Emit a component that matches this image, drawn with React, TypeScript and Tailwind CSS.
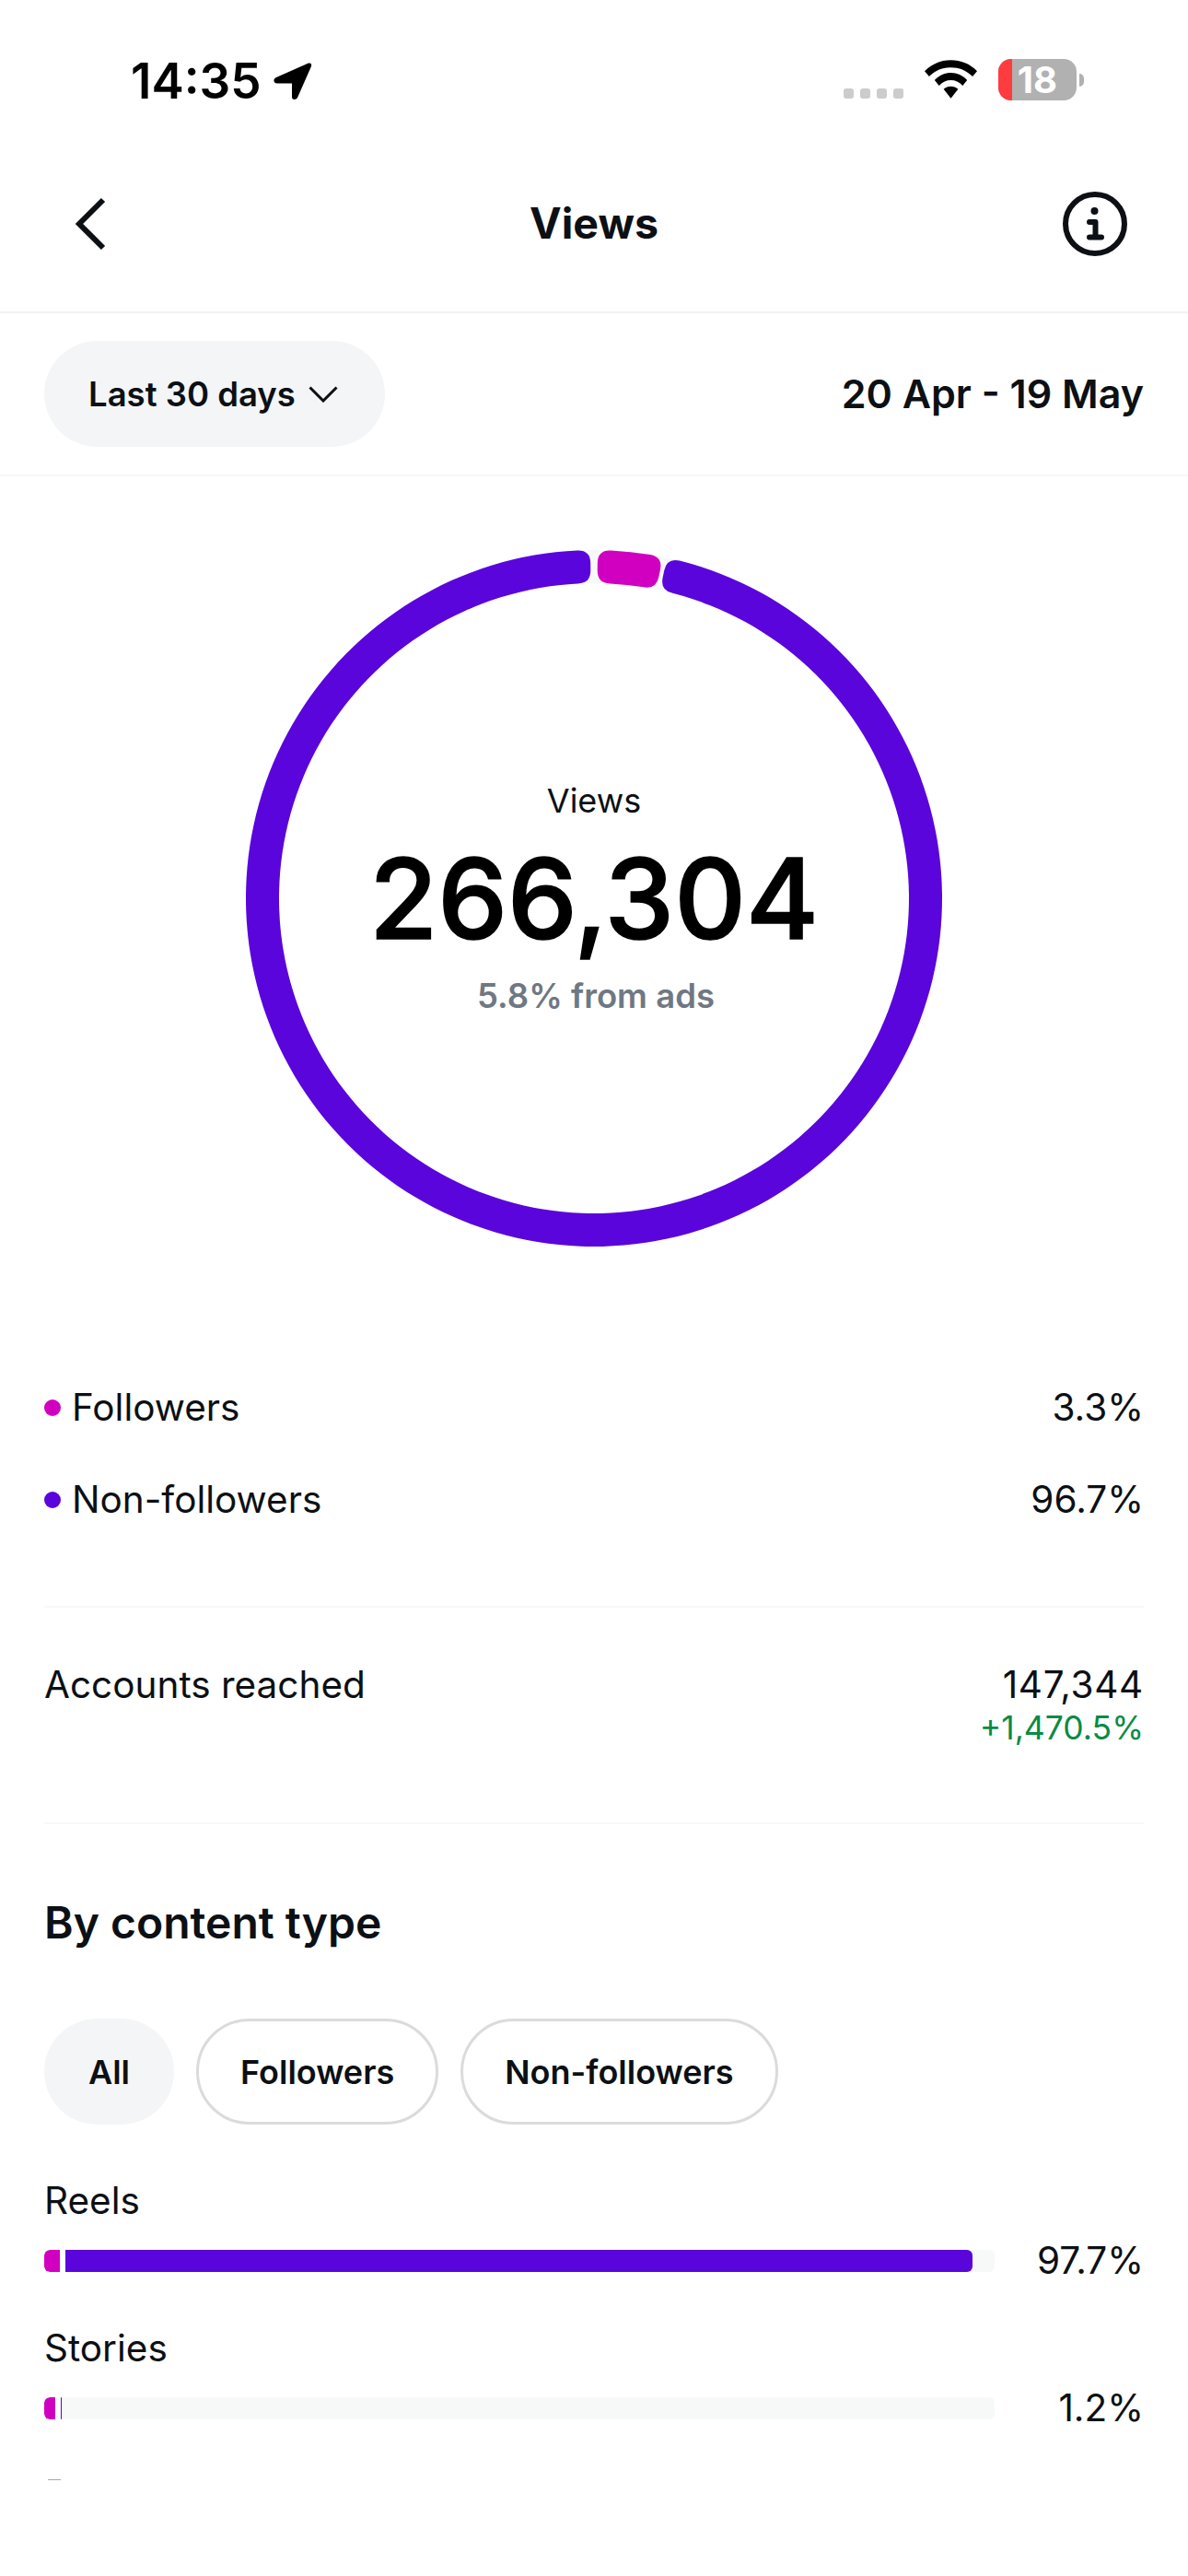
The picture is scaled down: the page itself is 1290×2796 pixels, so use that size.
const PURPLE = '#5a05dc';
const MAGENTA = '#d100c0';

// annular sector with rounded corners; angles in degrees, 0 at the top, clockwise
function sectorPath(start: number, end: number, cx = 378, cy = 378, ro = 378, ri = 342, c = 14) {
  const pt = (r: number, deg: number) => {
    const a = ((deg - 90) * Math.PI) / 180;
    return `${(cx + r * Math.cos(a)).toFixed(2)} ${(cy + r * Math.sin(a)).toFixed(2)}`;
  };
  const dO = (c / ro) * (180 / Math.PI);
  const dI = (c / ri) * (180 / Math.PI);
  const large = end - start > 180 ? 1 : 0;
  return [
    `M ${pt(ro, start + dO)}`,
    `A ${ro} ${ro} 0 ${large} 1 ${pt(ro, end - dO)}`,
    `Q ${pt(ro, end)} ${pt(ro - c, end)}`,
    `L ${pt(ri + c, end)}`,
    `Q ${pt(ri, end)} ${pt(ri, end - dI)}`,
    `A ${ri} ${ri} 0 ${large} 0 ${pt(ri, start + dI)}`,
    `Q ${pt(ri, start)} ${pt(ri + c, start)}`,
    `L ${pt(ro - c, start)}`,
    `Q ${pt(ro, start)} ${pt(ro, start + dO)}`,
    'Z',
  ].join(' ');
}

function Donut() {
  return (
    <svg width="756" height="756" viewBox="0 0 756 756" className="block">
      <circle cx="378" cy="378" r="360" fill="none" stroke="#f7f9f9" strokeWidth="36" />
      <path d={sectorPath(12.1, 359.4)} fill={PURPLE} />
      <path d={sectorPath(0.6, 11.4)} fill={MAGENTA} />
    </svg>
  );
}

function StatusBar() {
  return (
    <div className="h-[167px] pl-[142px] pr-[113px] flex items-start justify-between">
      <div className="flex items-start pt-[59px]">
        <span className="text-[53px] leading-[58px] font-semibold text-black">14:35</span>
        <svg width="42" height="42" viewBox="0 0 42 42" className="ml-[13px] mt-[8px]">
          <path d="M38 1.5 L3 17 Q0 18.5 0.5 21 Q1 23.5 4 23.5 L20 23.5 L20 38 Q20 41 22.5 41 Q25 41 26 39 L41 5 Q42 1 38 1.5 Z" fill="#000" />
        </svg>
      </div>
      <div className="flex items-start pt-[64px]">
        <div className="flex gap-[7px] mt-[32px] mr-[23px]">
          {[0, 1, 2, 3].map((i) => (
            <div key={i} className="w-[11px] h-[11px] rounded-[3px] bg-[#cccccc]" />
          ))}
        </div>
        <svg width="57" height="42" viewBox="0 0 58 42" className="mt-[1px] mr-[23px]">
          <path d="M29 0 C40 0 50 4 58 12 L53 18 C46 11 38 8 29 8 C20 8 12 11 5 18 L0 12 C8 4 18 0 29 0 Z" fill="#000" />
          <path d="M29 14 C36 14 42 17 47 22 L42 28 C38 24 34 22 29 22 C24 22 20 24 16 28 L11 22 C16 17 22 14 29 14 Z" fill="#000" />
          <path d="M29 29 C32 29 35 30 37 32 L29 42 L21 32 C23 30 26 29 29 29 Z" fill="#000" />
        </svg>
        <div className="flex items-center">
          <div className="relative w-[85px] h-[45px] rounded-[14px] bg-[#b1b1b1] flex items-center justify-center">
            <div className="absolute left-0 top-0 bottom-0 w-[15px] rounded-l-[14px] bg-[#fe3c3f]" />
            <span className="relative text-[40px] leading-[45px] font-bold text-white">18</span>
          </div>
          <div className="w-[5px] h-[14px] ml-[3px] rounded-r-[5px] bg-[#b1b1b1]" />
        </div>
      </div>
    </div>
  );
}

function Bar({ label, pct, magenta, gap, spacer = 0, purple }: { label: string; pct: string; magenta: number; gap: number; spacer?: number; purple: number }) {
  return (
    <div className="h-[160px]">
      <div className="text-[40.5px] leading-[48px] text-[#0c1014]">{label}</div>
      <div className="flex items-center mt-[17px]">
        <div className="w-[1032px] h-[24px] rounded-[6px] bg-[#f7f9f9] overflow-hidden flex">
          <div className="h-full rounded-l-[6px]" style={{ width: magenta, background: MAGENTA }} />
          <div className="h-full bg-white" style={{ width: gap }} />
          <div className="h-full" style={{ width: spacer }} />
          <div className="h-full rounded-r-[6px]" style={{ width: purple, background: PURPLE }} />
        </div>
        <div className="flex-1 text-right text-[40.5px] leading-[48px] text-[#0c1014]">{pct}</div>
      </div>
    </div>
  );
}

function Pill({ label, active }: { label: string; active?: boolean }) {
  return (
    <div
      className={
        active
          ? 'h-[115px] px-[48px] rounded-full bg-[#f3f5f7] flex items-center text-[36px] font-semibold text-[#0c1014]'
          : 'h-[115px] px-[45px] rounded-full border-[3px] border-[#dbdbdb] flex items-center text-[36px] font-semibold text-[#0c1014]'
      }
    >
      {label}
    </div>
  );
}

export default function App() {
  return (
    <div className="w-[1290px] h-[2796px] bg-white overflow-hidden font-['Inter',sans-serif] text-[#0c1014]">
      <StatusBar />

      <div className="h-[173px] pb-[20px] px-[66px] grid grid-cols-[1fr_auto_1fr] items-center border-b-[2px] border-[#f1f2f3]">
        <svg width="40" height="60" viewBox="0 0 40 60" className="ml-[12px]">
          <path d="M34 4 L8 30 L34 56" fill="none" stroke="#0c1014" strokeWidth="6" />
        </svg>
        <span className="text-[46.5px] font-bold">Views</span>
        <svg width="70" height="70" viewBox="0 0 70 70" className="justify-self-end">
          <circle cx="35" cy="35" r="32" fill="none" stroke="#0c1014" strokeWidth="6" />
          <circle cx="34.5" cy="21" r="4" fill="#0c1014" />
          <path d="M29 33 H35.5 V49 M29 49.5 H42" fill="none" stroke="#0c1014" strokeWidth="6" strokeLinecap="round" strokeLinejoin="round" />
        </svg>
      </div>

      <div className="h-[177px] px-[48px] flex items-center justify-between border-b-[2px] border-[#f7f8f8]">
        <div className="h-[115px] w-[370px] rounded-full bg-[#f3f5f7] flex items-center pl-[48px]">
          <span className="mt-[2px] text-[36.5px] font-semibold">Last 30 days</span>
          <svg width="32" height="18" viewBox="0 0 32 18" className="ml-[14px]">
            <path d="M1.5 1.5 L16 16 L30.5 1.5" fill="none" stroke="#0c1014" strokeWidth="3" />
          </svg>
        </div>
        <span className="text-[43px] font-semibold">20 Apr - 19 May</span>
      </div>

      <div className="relative h-[756px] mt-[80px] flex justify-center">
        <Donut />
        <div className="absolute inset-0 flex flex-col items-center justify-center gap-[14px]">
          <span className="text-[36px] leading-[44px]">Views</span>
          <span className="text-[120.5px] leading-[140px] font-medium text-black [-webkit-text-stroke:1.5px_#000]">266,304</span>
          <span className="pl-[4px] text-[36.5px] leading-[44px] font-semibold text-[#6f7883]">5.8% from ads</span>
        </div>
      </div>

      <div className="px-[48px]">
        <div className="pt-[151px] h-[392px] border-b-[2px] border-[#f7f8f8]">
          <div className="flex items-center justify-between h-[48px] text-[40.5px]">
            <div className="flex items-center">
              <span className="w-[18px] h-[18px] rounded-full mr-[12px]" style={{ background: MAGENTA }} />
              Followers
            </div>
            <span>3.3%</span>
          </div>
          <div className="flex items-center justify-between h-[48px] mt-[52px] text-[40.5px]">
            <div className="flex items-center">
              <span className="w-[18px] h-[18px] rounded-full mr-[12px]" style={{ background: PURPLE }} />
              Non-followers
            </div>
            <span>96.7%</span>
          </div>
        </div>

        <div className="h-[235px] pt-[60px] flex justify-between border-b-[2px] border-[#f7f8f8]">
          <span className="text-[40.5px] leading-[48px]">Accounts reached</span>
          <div className="text-right">
            <div className="text-[40.5px] leading-[48px] tracking-[0.7px]">147,344</div>
            <div className="mt-[3px] text-[35.5px] leading-[40px] text-[#0a8a45]">+1,470.5%</div>
          </div>
        </div>

        <div className="pt-[79px] text-[48px] leading-[56px] font-semibold">By content type</div>

        <div className="flex gap-[24px] mt-[76px]">
          <Pill label="All" active />
          <Pill label="Followers" />
          <Pill label="Non-followers" />
        </div>

        <div className="mt-[59px]">
          <Bar label="Reels" pct="97.7%" magenta={17} gap={6} purple={985} />
          <Bar label="Stories" pct="1.2%" magenta={12} gap={2} spacer={4} purple={1} />
          {/* top edge of the next row, cut off by the scroll area */}
          <div className="w-[14px] h-[1px] mt-[6px] ml-[4px] bg-[#a8a8a8]" />
        </div>
      </div>
    </div>
  );
}
